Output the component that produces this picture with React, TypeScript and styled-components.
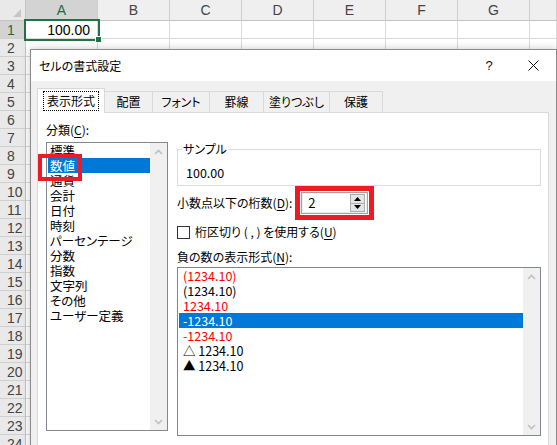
import React from 'react';
import styled, { createGlobalStyle } from 'styled-components';

const GlobalStyle = createGlobalStyle`
  html, body {
    margin: 0;
    padding: 0;
    overflow: hidden;
    background: #fff;
  }
  #root {
    width: 557px;
    height: 445px;
  }
`;

const COLUMNS = ['A', 'B', 'C', 'D', 'E', 'F', 'G', ''];
const ROW_COUNT = 24;

const TABS = [
  { label: '表示形式', width: 68 },
  { label: '配置', width: 49 },
  { label: 'フォント', width: 58 },
  { label: '罫線', width: 55 },
  { label: '塗りつぶし', width: 67 },
  { label: '保護', width: 54 },
];

const CATEGORIES = [
  '標準',
  '数値',
  '通貨',
  '会計',
  '日付',
  '時刻',
  'パーセンテージ',
  '分数',
  '指数',
  '文字列',
  'その他',
  'ユーザー定義',
];

const NEGATIVES = [
  { text: '(1234.10)', red: true },
  { text: '(1234.10)', red: false },
  { text: '1234.10', red: true },
  { text: '-1234.10', red: false },
  { text: '-1234.10', red: true },
  { text: '△ 1234.10', red: false },
  { text: '▲ 1234.10', red: false },
];

const Page = styled.div`
  position: relative;
  width: 557px;
  height: 445px;
  overflow: hidden;
  font-family: "Liberation Sans", Arial, sans-serif;
`;

/* spreadsheet behind the dialog */
const Sheet = styled.div`
  display: grid;
  grid-template-columns: 26px repeat(7, 72px) 1fr;
  grid-template-rows: 21px repeat(${ROW_COUNT}, 18px);
`;

const Corner = styled.div`
  position: relative;
  background: #e9e9e9;
  border-right: 1px solid #c4c4c4;
  border-bottom: 1px solid #c4c4c4;

  &::after {
    content: '';
    position: absolute;
    right: 4px;
    bottom: 3px;
    border-left: 8px solid transparent;
    border-bottom: 8px solid #c6c6c6;
  }
`;

const ColHead = styled.div<{ $active?: boolean }>`
  display: flex;
  align-items: center;
  justify-content: center;
  background: ${(p) => (p.$active ? '#d3d3d3' : '#efefef')};
  color: ${(p) => (p.$active ? '#1e6b40' : '#444')};
  border-right: 1px solid #cfcfcf;
  border-bottom: 1px solid ${(p) => (p.$active ? '#217346' : '#c4c4c4')};
  font-size: 14px;
`;

const RowHead = styled.div<{ $active?: boolean }>`
  display: flex;
  align-items: center;
  padding-left: 7px;
  background: ${(p) => (p.$active ? '#d3d3d3' : '#e9e9e9')};
  color: ${(p) => (p.$active ? '#1e6b40' : '#444')};
  border-right: 1px solid ${(p) => (p.$active ? '#217346' : '#c4c4c4')};
  border-bottom: 1px solid #cfcfcf;
  font-size: 14px;
`;

const Cell = styled.div<{ $selected?: boolean }>`
  position: relative;
  display: flex;
  align-items: center;
  justify-content: flex-end;
  padding-right: 7px;
  border-right: 1px solid #d9d9d9;
  border-bottom: 1px solid #d9d9d9;
  font-size: 14px;
  color: #000;
  outline: ${(p) => (p.$selected ? '2px solid #217346' : 'none')};
  outline-offset: 0;
  z-index: ${(p) => (p.$selected ? 1 : 0)};

  &::after {
    content: '';
    display: ${(p) => (p.$selected ? 'block' : 'none')};
    position: absolute;
    right: -5px;
    bottom: -5px;
    width: 5px;
    height: 5px;
    background: #217346;
    border: 1px solid #fff;
  }
`;

/* format cells dialog */
const Dialog = styled.div`
  position: absolute;
  left: 30px;
  top: 49px;
  width: 527px;
  height: 420px;
  box-sizing: border-box;
  display: flex;
  flex-direction: column;
  background: #f0f0f0;
  border: 1px solid #8c8c8c;
  box-shadow: 0 0 8px rgba(0, 0, 0, 0.22);
  z-index: 2;
  font-family: "Noto Sans CJK JP", "Noto Sans", sans-serif;
  font-feature-settings: "palt";
  font-size: 12px;
  color: #000;
`;

const TitleBar = styled.div`
  height: 31px;
  display: flex;
  align-items: center;
  background: #fff;
  padding-left: 8px;
`;

const Title = styled.div`
  flex: 1;
  font-size: 12px;
  line-height: 16px;
  padding-top: 1px;
`;

const TitleButton = styled.div<{ $w: number }>`
  width: ${(p) => p.$w}px;
  height: 31px;
  display: flex;
  align-items: center;
  justify-content: center;
  font-family: "Liberation Sans", Arial, sans-serif;
  font-size: 13px;
  color: #111;
`;

const Body = styled.div`
  flex: 1;
  display: flex;
  flex-direction: column;
  padding: 7px 7px 0 6px;
`;

const TabStrip = styled.div`
  display: flex;
  align-items: flex-end;
  height: 25px;
  margin-bottom: -1px;
  position: relative;
  z-index: 1;
`;

const Tab = styled.div<{ $active?: boolean; $w: number }>`
  width: ${(p) => p.$w}px;
  height: ${(p) => (p.$active ? 25 : 22)}px;
  box-sizing: border-box;
  display: flex;
  align-items: center;
  justify-content: center;
  margin-left: -1px;
  background: ${(p) => (p.$active ? '#fff' : '#f0f0f0')};
  border: 1px solid #d9d9d9;
  border-bottom: ${(p) => (p.$active ? 'none' : '1px solid #d9d9d9')};
  line-height: 16px;

  &:first-child {
    margin-left: 0;
  }
`;

const FocusText = styled.span`
  padding: 1px 3px;
  border: 1px dotted #000;
  line-height: 16px;
`;

const Panel = styled.div`
  flex: 1;
  display: flex;
  gap: 9px;
  padding: 9px 7px 0 8px;
  background: #fff;
  border: 1px solid #d9d9d9;
`;

const LeftCol = styled.div`
  width: 122px;
  display: flex;
  flex-direction: column;
`;

const RightCol = styled.div`
  width: 364px;
  display: flex;
  flex-direction: column;
`;

const Label = styled.div<{ $gap?: number }>`
  line-height: 16px;
  margin-top: ${(p) => p.$gap ?? 0}px;
  white-space: nowrap;
`;

const Key = styled.span`
  text-decoration: underline;
  text-underline-offset: 2px;
`;

const ListBox = styled.div<{ $h: number; $gap: number }>`
  position: relative;
  height: ${(p) => p.$h}px;
  margin-top: ${(p) => p.$gap}px;
  box-sizing: border-box;
  display: flex;
  border: 1px solid #828790;
  background: #fff;
`;

const Items = styled.div`
  flex: 1;
  padding-left: 1px;
`;

const Item = styled.div<{ $selected?: boolean; $red?: boolean; $indent: number }>`
  height: 15px;
  line-height: 15px;
  padding-left: ${(p) => p.$indent}px;
  white-space: nowrap;
  font-size: 12.5px;
  background: ${(p) => (p.$selected ? '#0078d7' : 'transparent')};
  color: ${(p) => (p.$selected ? '#fff' : p.$red ? '#ff0000' : '#000')};
`;

const ScrollBar = styled.div`
  width: 17px;
  display: flex;
  flex-direction: column;
  justify-content: space-between;
  background: #f0f0f0;
`;

const ScrollArrow = styled.div`
  height: 17px;
  display: flex;
  align-items: center;
  justify-content: center;
`;

const Mark = styled.div`
  position: absolute;
  left: -9px;
  top: 11px;
  width: 44px;
  height: 27px;
  box-sizing: border-box;
  border: 4px solid #ed1c24;
  pointer-events: none;
`;

const Sample = styled.fieldset`
  margin: 19px 0 0;
  padding: 8px 8px 4px;
  border: 1px solid #dcdcdc;
  min-width: 0;
`;

const Legend = styled.legend`
  padding: 0 1px;
  margin-left: -4px;
  line-height: 16px;
`;

const SampleValue = styled.div`
  line-height: 16px;
  font-size: 12.5px;
`;

const DigitsRow = styled.div`
  display: flex;
  align-items: center;
  gap: 3px;
`;

const RedFrame = styled.div`
  padding: 1px;
  background: #fff;
  border: 5px solid #ed1c24;
`;

const SpinInput = styled.div`
  width: 67px;
  height: 22px;
  box-sizing: border-box;
  display: flex;
  align-items: center;
  justify-content: space-between;
  padding-left: 6px;
  border: 1px solid #a3a3a3;
  box-shadow: inset 0 0 0 1px #ececec;
  line-height: 16px;
  font-size: 13px;
`;

const SpinButtons = styled.div`
  width: 15px;
  height: 18px;
  margin-right: 2px;
  display: flex;
  flex-direction: column;
`;

const SpinButton = styled.div`
  flex: 1;
  display: flex;
  align-items: center;
  justify-content: center;
  background: #e5e5e5;
  border: 1px solid #adadad;

  & + & {
    border-top: none;
  }
`;

const CheckRow = styled.div`
  display: flex;
  align-items: center;
  gap: 5px;
  margin-top: 4px;
  line-height: 16px;
`;

const CheckBox = styled.div`
  width: 13px;
  height: 13px;
  box-sizing: border-box;
  border: 1px solid #333;
  background: #fff;
`;

const Chevron = ({ up }: { up?: boolean }) => (
  <svg width="9" height="6" viewBox="0 0 9 6">
    <polyline
      points={up ? '1,5 4.5,1.5 8,5' : '1,1 4.5,4.5 8,1'}
      fill="none"
      stroke="#c0c0c0"
      strokeWidth="1.6"
    />
  </svg>
);

const Arrow = ({ up }: { up?: boolean }) => (
  <svg width="7" height="4" viewBox="0 0 7 4">
    <polygon points={up ? '0,4 3.5,0 7,4' : '0,0 7,0 3.5,4'} fill="#000" />
  </svg>
);

const CloseIcon = () => (
  <svg width="11" height="11" viewBox="0 0 11 11">
    <path d="M0.5 0.5 L10.5 10.5 M10.5 0.5 L0.5 10.5" stroke="#111" strokeWidth="1" />
  </svg>
);

function App() {
  return (
    <Page>
      <GlobalStyle />
      <Sheet>
        <Corner />
        {COLUMNS.map((c, i) => (
          <ColHead key={i} $active={c === 'A'}>
            {c}
          </ColHead>
        ))}
        {Array.from({ length: ROW_COUNT }, (_, r) => (
          <React.Fragment key={r}>
            <RowHead $active={r === 0}>{r + 1}</RowHead>
            {COLUMNS.map((c, i) => (
              <Cell key={i} $selected={r === 0 && c === 'A'}>
                {r === 0 && c === 'A' ? '100.00' : ''}
              </Cell>
            ))}
          </React.Fragment>
        ))}
      </Sheet>

      <Dialog>
        <TitleBar>
          <Title>セルの書式設定</Title>
          <TitleButton $w={44}>?</TitleButton>
          <TitleButton $w={45}>
            <CloseIcon />
          </TitleButton>
        </TitleBar>

        <Body>
          <TabStrip>
            {TABS.map((t, i) => (
              <Tab key={t.label} $w={t.width} $active={i === 0}>
                {i === 0 ? <FocusText>{t.label}</FocusText> : t.label}
              </Tab>
            ))}
          </TabStrip>

          <Panel>
            <LeftCol>
              <Label>
                分類(<Key>C</Key>):
              </Label>
              <ListBox $h={289} $gap={4}>
                <Items>
                  {CATEGORIES.map((c) => (
                    <Item key={c} $indent={2} $selected={c === '数値'}>
                      {c}
                    </Item>
                  ))}
                </Items>
                <ScrollBar>
                  <ScrollArrow>
                    <Chevron up />
                  </ScrollArrow>
                  <ScrollArrow>
                    <Chevron />
                  </ScrollArrow>
                </ScrollBar>
                <Mark />
              </ListBox>
            </LeftCol>

            <RightCol>
              <Sample>
                <Legend>サンプル</Legend>
                <SampleValue>100.00</SampleValue>
              </Sample>

              <DigitsRow>
                <Label>
                  小数点以下の桁数(<Key>D</Key>):
                </Label>
                <RedFrame>
                  <SpinInput>
                    2
                    <SpinButtons>
                      <SpinButton>
                        <Arrow up />
                      </SpinButton>
                      <SpinButton>
                        <Arrow />
                      </SpinButton>
                    </SpinButtons>
                  </SpinInput>
                </RedFrame>
              </DigitsRow>

              <CheckRow>
                <CheckBox />
                <span>
                  桁区切り ( , ) を使用する(<Key>U</Key>)
                </span>
              </CheckRow>

              <Label $gap={9}>
                負の数の表示形式(<Key>N</Key>):
              </Label>
              <ListBox $h={169} $gap={2}>
                <Items>
                  {NEGATIVES.map((n, i) => (
                    <Item key={i} $indent={4} $red={n.red} $selected={i === 3}>
                      {n.text}
                    </Item>
                  ))}
                </Items>
                <ScrollBar>
                  <ScrollArrow>
                    <Chevron up />
                  </ScrollArrow>
                  <ScrollArrow>
                    <Chevron />
                  </ScrollArrow>
                </ScrollBar>
              </ListBox>
            </RightCol>
          </Panel>
        </Body>
      </Dialog>
    </Page>
  );
}

export default App;
